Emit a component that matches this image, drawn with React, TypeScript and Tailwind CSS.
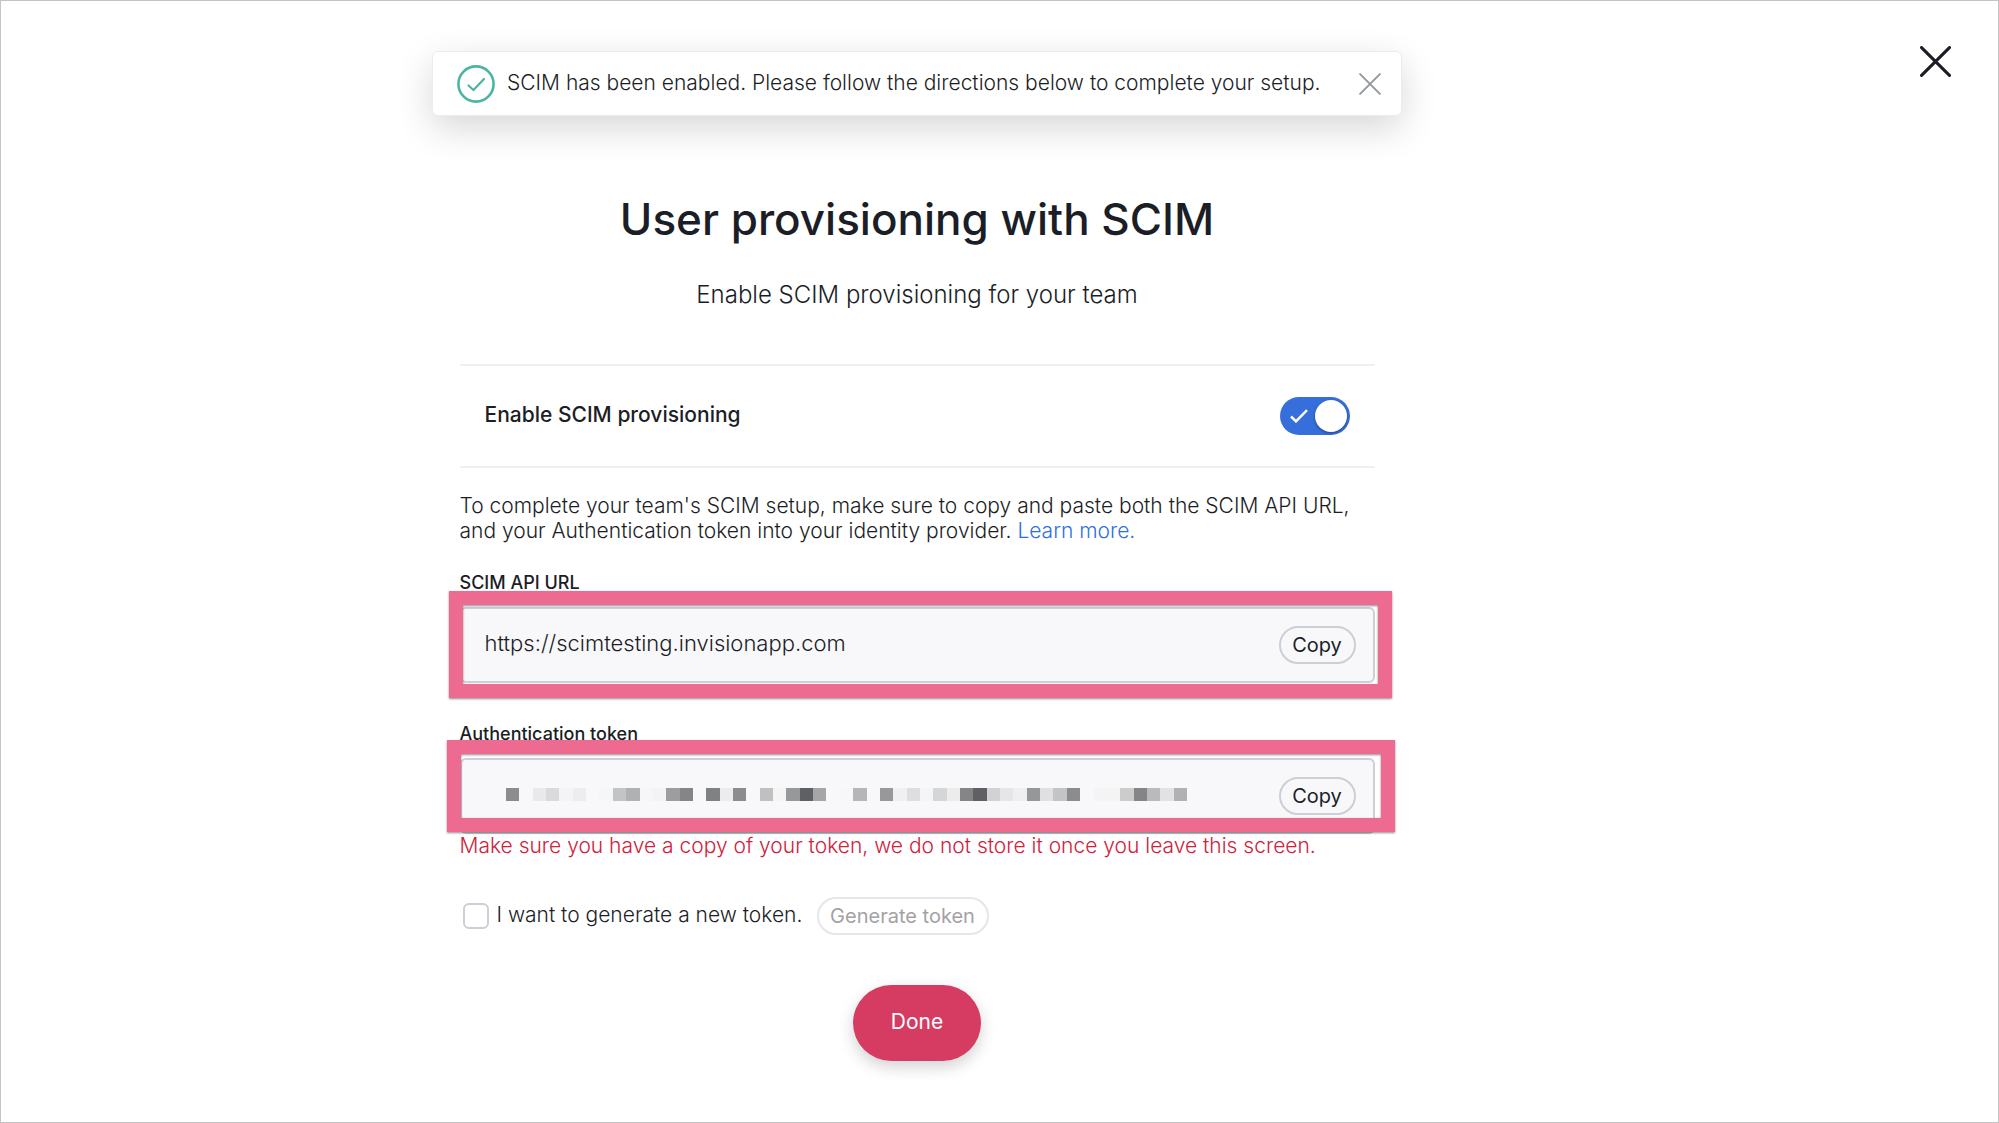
import { useState } from "react";

const TOKEN_SHADES = [
  "#8b8c90", "#f8f8fb", "#e9e9eb", "#dadadc", "#f4f4f6", "#ededef", "#f8f8fb", "#f6f6f7", "#c3c4c6", "#b0b1b3",
  "#f6f6f8", "#f3f3f4", "#9d9d9f", "#858587", "#f8f8fb", "#808183", "#ececee", "#8b8c8e", "#f8f8fb", "#c0c0c2",
  "#f4f4f5", "#97989a", "#5f6063", "#a6a6a8", "#f8f8fb", "#f7f7f7", "#b6b6b8", "#f8f8fb", "#98989a", "#f0f0f1",
  "#dedee0", "#f5f5f5", "#d5d6d8", "#ececed", "#858587", "#5f6063", "#d2d2d4", "#e6e6e8", "#efeff1", "#969799",
  "#e0e0e2", "#c3c4c6", "#8b8c90", "#f8f8fb", "#f4f4f5", "#f4f4f5", "#cccccd", "#858587", "#bababc", "#e2e2e4",
  "#b0b1b3",
];

function Cross({ className, weight }: { className: string; weight: number }) {
  return (
    <svg viewBox="0 0 30 30" className={className} fill="none" stroke="currentColor" strokeWidth={weight} strokeLinecap="round" aria-hidden="true">
      <path d="M1.5 1.5 28.5 28.5M28.5 1.5 1.5 28.5" />
    </svg>
  );
}

function CopyButton({ label }: { label: string }) {
  return (
    <button type="button" aria-label={label} className="h-[38px] w-[77px] shrink-0 rounded-full border-2 border-[#cdced6] text-xl leading-6">
      Copy
    </button>
  );
}

function ObscuredToken() {
  return (
    <svg viewBox="0 0 510 10" className="ml-[21px] h-[13px] w-[681px]" preserveAspectRatio="none" shapeRendering="crispEdges" role="img" aria-label="Hidden authentication token">
      {TOKEN_SHADES.map((shade, i) => (
        <rect key={i} x={i * 10} y="0" width="10" height="10" fill={shade} />
      ))}
    </svg>
  );
}

export default function App() {
  const [enabled, setEnabled] = useState(true);
  const [wantsToken, setWantsToken] = useState(false);

  return (
    <div className="flex min-h-screen border border-[#c4c4c4] bg-white font-['Inter',sans-serif] text-[#1b1e26]">
      <main className="flex min-w-0 flex-1 flex-col items-center pt-[50px]">
        <div role="status" className="flex h-[65px] w-full max-w-[970px] items-center rounded-md border border-[#ececec] bg-white pr-5 pl-6 shadow-[0_12px_36px_rgba(0,0,0,0.16)]">
          <svg viewBox="0 0 38 38" className="size-[38px] shrink-0" fill="none" stroke="#4cb5a1" aria-hidden="true">
            <circle cx="19" cy="19" r="17.6" strokeWidth="2.6" />
            <path d="M11.5 20.5 16.5 25 27 14" strokeWidth="2.2" strokeLinecap="round" />
          </svg>
          <p className="ml-3 flex-1 pb-0.5 text-[21px] leading-7 font-light whitespace-nowrap">
            SCIM has been enabled. Please follow the directions below to complete your setup.
          </p>
          <button type="button" aria-label="Dismiss message" className="text-[#9496a1]">
            <Cross className="size-[22px]" weight={2.6} />
          </button>
        </div>

        <div className="flex w-full max-w-[915px] flex-col">
          <h1 className="mt-[75px] text-center text-[44px] leading-[56px] font-medium">User provisioning with SCIM</h1>
          <p className="mt-8 text-center text-2xl leading-8 font-light">Enable SCIM provisioning for your team</p>

          <div className="mt-[53px] flex h-[104px] items-center justify-between border-y-2 border-[#efefef] px-[25px]">
            <label htmlFor="scim-toggle" className="pb-0.5 text-[21px] leading-7 font-medium">Enable SCIM provisioning</label>
            <button
              id="scim-toggle"
              type="button"
              role="switch"
              aria-checked={enabled}
              onClick={() => setEnabled(!enabled)}
              className="flex h-[38px] w-[70px] items-center justify-between rounded-full bg-[#366fdc] pr-[3px] pl-2.5"
            >
              <svg viewBox="0 0 18 14" className="h-3.5 w-[18px]" fill="none" stroke="white" strokeWidth="2.5" aria-hidden="true">
                <path d="M1 7.5 6 12.3 17 1.2" />
              </svg>
              <span className="size-8 rounded-full bg-white shadow-[0_1px_3px_rgba(0,0,0,0.4)]" />
            </button>
          </div>

          <p className="mt-[25px] text-[21px] leading-[25px] font-light">
            To complete your team's SCIM setup, make sure to copy and paste both the SCIM API URL, and your Authentication token into your identity provider.{" "}
            <a href="#learn" className="text-[#2f6fe4]">Learn more.</a>
          </p>

          <label htmlFor="api-url" className="mt-7 text-lg leading-6 font-medium">SCIM API URL</label>
          <div className="relative mt-3 flex h-[76px] items-center rounded-md border-2 border-[#cdced6] bg-[#f8f8fb] pr-[17px] pl-[23px]">
            <input id="api-url" readOnly value="https://scimtesting.invisionapp.com" className="min-w-0 flex-1 bg-transparent pb-1 text-[22px] leading-7 font-light outline-none" />
            <CopyButton label="Copy SCIM API URL" />
            <div className="pointer-events-none absolute -top-[18px] -right-[19px] -bottom-[17px] -left-[13px] border-[14px] border-[#ed6b90] drop-shadow-[0_1px_1px_rgba(0,0,0,0.45)]" />
          </div>

          <h2 className="mt-[39px] text-lg leading-6 font-medium">Authentication token</h2>
          <div className="relative mt-3 flex h-[76px] items-center rounded-md border-2 border-[#cdced6] bg-[#f8f8fb] pr-[17px] pl-[23px]">
            <div className="flex min-w-0 flex-1 pb-1">
              <ObscuredToken />
            </div>
            <CopyButton label="Copy authentication token" />
            <div className="pointer-events-none absolute -top-[20px] -right-[22px] bottom-0 -left-[15px] border-[14px] border-[#ed6b90] drop-shadow-[0_1px_1px_rgba(0,0,0,0.45)]" />
          </div>
          <p className="text-[21px] leading-6 font-light text-[#d0213c]">
            Make sure you have a copy of your token, we do not store it once you leave this screen.
          </p>

          <div className="mt-[39px] flex items-center pl-[3px]">
            <input
              id="new-token"
              type="checkbox"
              checked={wantsToken}
              onChange={(e) => setWantsToken(e.target.checked)}
              className="size-[26px] appearance-none rounded-md border-2 border-[#cdced6] bg-white checked:bg-[#366fdc]"
            />
            <label htmlFor="new-token" className="ml-2 w-[312px] pb-0.5 text-[21px] leading-7 font-light">I want to generate a new token.</label>
            <button type="button" disabled={!wantsToken} className="ml-2 h-[38px] w-[172px] rounded-full border-2 border-[#e6e6ea] text-xl leading-6 text-[#a2a2a5]">
              Generate token
            </button>
          </div>

          <button type="button" className="mt-[50px] h-[76px] w-32 self-center rounded-full bg-[#d63c62] pb-0.5 text-[21px] leading-7 text-white shadow-[0_6px_16px_rgba(0,0,0,0.18)]">
            Done
          </button>
        </div>
      </main>

      <aside className="flex w-[165px] shrink-0 items-start justify-end pt-[45px] pr-[47px]">
        <button type="button" aria-label="Close">
          <Cross className="size-[31px]" weight={3} />
        </button>
      </aside>
    </div>
  );
}
